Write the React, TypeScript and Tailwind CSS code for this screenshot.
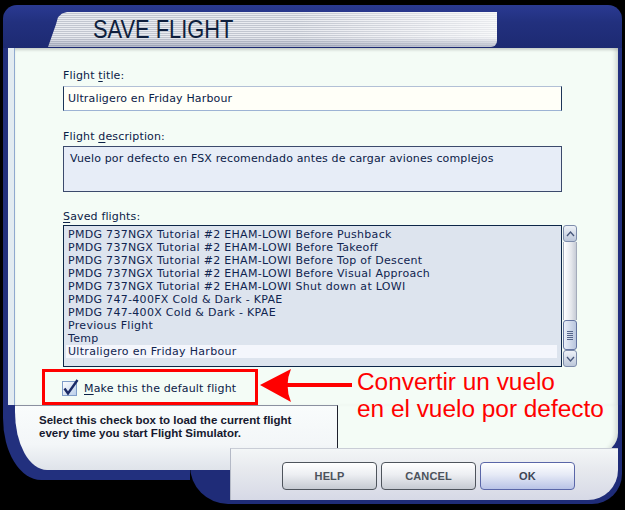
import React from 'react';

const flights = [
  'PMDG 737NGX Tutorial #2 EHAM-LOWI Before Pushback',
  'PMDG 737NGX Tutorial #2 EHAM-LOWI Before Takeoff',
  'PMDG 737NGX Tutorial #2 EHAM-LOWI Before Top of Descent',
  'PMDG 737NGX Tutorial #2 EHAM-LOWI Before Visual Approach',
  'PMDG 737NGX Tutorial #2 EHAM-LOWI Shut down at LOWI',
  'PMDG 747-400FX Cold & Dark - KPAE',
  'PMDG 747-400X Cold & Dark - KPAE',
  'Previous Flight',
  'Temp',
  'Ultraligero en Friday Harbour',
];

function Chevron({ up }: { up?: boolean }) {
  return (
    <svg width="9" height="6" viewBox="0 0 9 6" aria-hidden>
      <path
        d={up ? 'M1 5 L4.5 1 L8 5' : 'M1 1 L4.5 5 L8 1'}
        stroke="#46567a"
        strokeWidth="1.3"
        fill="none"
      />
    </svg>
  );
}

function Scrollbar() {
  return (
    <div className="ml-px flex w-[14px] flex-col">
      <div className="flex h-[17px] items-center justify-center rounded-[3px] border border-[#7d8cab] bg-[image:linear-gradient(180deg,#eef2f8,#bcc7da)]">
        <Chevron up />
      </div>
      <div className="h-[78px] border-x border-[#a3abbb] bg-[image:linear-gradient(90deg,#ffffff,#e4e7ec_60%,#c7ccd6)]" />
      <div className="flex h-[30px] flex-col items-center justify-center gap-px rounded-[3px] border border-[#6474a0] bg-[image:linear-gradient(90deg,#e8eef8,#b9c6de)]">
        {[0, 1, 2, 3, 4].map((i) => (
          <div key={i} className="h-px w-[6px] bg-[#55658a]" />
        ))}
      </div>
      <div className="flex h-[17px] items-center justify-center rounded-[3px] border border-[#7d8cab] bg-[image:linear-gradient(180deg,#eef2f8,#bcc7da)]">
        <Chevron />
      </div>
    </div>
  );
}

function DialogButton({ label, primary }: { label: string; primary?: boolean }) {
  return (
    <button
      className={
        primary
          ? "h-[28px] w-[95px] rounded-[4px] border border-[#5a66a8] bg-[image:linear-gradient(180deg,#ffffff,#e6eaf6_45%,#b9c3e6)] font-['Liberation_Sans',sans-serif] text-[11px] font-bold text-[#3c4454]"
          : "h-[28px] w-[95px] rounded-[4px] border border-[#4e545c] bg-[image:linear-gradient(180deg,#ffffff,#eceef2_45%,#c6cad2)] font-['Liberation_Sans',sans-serif] text-[11px] font-bold text-[#4c535c]"
      }
    >
      {label}
    </button>
  );
}

export default function App() {
  return (
    <div className="relative h-[510px] w-[625px] overflow-hidden bg-black font-['DejaVu_Sans',sans-serif] text-[11px] leading-[13px] tracking-[0.15px] text-[#0b2147]">
      <div className="ml-[3px] flex w-[619px] flex-col pt-[5px]">
        {/* title bar */}
        <div className="h-[43px] rounded-t-[14px] bg-[image:linear-gradient(180deg,#2a3a92,#22307e_40%,#1d2a72)] pl-[45px] pt-[7px]">
          <div className="h-[35px] w-[449px] rounded-br-[6px] bg-[image:linear-gradient(180deg,transparent_72%,rgba(80,90,125,0.35)),linear-gradient(90deg,rgba(255,255,255,0)_55%,rgba(255,255,255,0.65)),repeating-linear-gradient(180deg,#e9ebf0_0px,#e9ebf0_1px,#c2c6d0_1px,#c2c6d0_2px)] pl-[45px] [clip-path:polygon(0_100%,8px_35%,10px_15%,14px_4%,19px_0,100%_0,100%_100%)]">
            <span className="inline-block origin-left scale-x-[0.84] font-['Liberation_Sans',sans-serif] text-[26px] leading-[35px] tracking-normal text-[#0f1f3d]">
              SAVE FLIGHT
            </span>
          </div>
        </div>

        {/* main panel */}
        <div className="flex bg-[#22307e] pl-[5px] pr-[4px]">
          <div className="w-[6px] bg-[#e2ebf1]" />
          <div className="w-px bg-[#8fa9cf]" />
          <div className="flex h-[357px] flex-1 flex-col bg-[#f4fcf6] pl-[48px] pt-[21px] shadow-[inset_0_3px_3px_-1px_rgba(0,0,0,0.18),inset_-5px_0_4px_-2px_rgba(0,0,0,0.12)]">
            <div>
              Flight <span className="underline underline-offset-2">t</span>itle:
            </div>
            <div className="mt-[4px] h-[25px] w-[499px] border-x border-y border-x-[#1c3558] border-t-[#b2c0d6] border-b-[#9db3d4] bg-[#fffff8] pl-[4px] leading-[23px]">
              Ultraligero en Friday Harbour
            </div>

            <div className="mt-[19px]">
              Flight <span className="underline underline-offset-2">d</span>escription:
            </div>
            <div className="mt-[3px] h-[46px] w-[499px] border border-[#3b4a6c] bg-[#e7edf7] pl-[6px] pt-[5px]">
              Vuelo por defecto en FSX recomendado antes de cargar aviones complejos
            </div>

            <div className="mt-[18px]">
              <span className="underline underline-offset-2">S</span>aved flights:
            </div>
            <div className="mt-[2px] flex">
              <div className="h-[142px] w-[499px] border border-[#0c2648] bg-[#dde4ee] pt-[2px] tracking-[0.3px]">
                {flights.map((f, i) => (
                  <div
                    key={f}
                    className={
                      i === flights.length - 1
                        ? 'mx-[2px] mr-[4px] h-[13px] bg-[#f4f6fc] pl-[2px] text-[#102450]'
                        : 'mx-[2px] h-[13px] pl-[2px] text-[#102450]'
                    }
                  >
                    {f}
                  </div>
                ))}
              </div>
              <Scrollbar />
            </div>

            <div className="-ml-px mt-[12px] flex items-center gap-[4px]">
              <svg width="18" height="17" viewBox="0 0 18 17" aria-hidden>
                <defs>
                  <linearGradient id="cb" x1="0" y1="0" x2="1" y2="1">
                    <stop offset="0" stopColor="#ffffff" />
                    <stop offset="1" stopColor="#b9cdea" />
                  </linearGradient>
                </defs>
                <rect x="0.5" y="2.5" width="14" height="14" fill="url(#cb)" stroke="#7f9dc9" />
                <path d="M2.5 9.5 L6 14.5 L15.5 1" stroke="#1a2a66" strokeWidth="2.4" fill="none" />
              </svg>
              <div className="pt-[2px]">
                <span className="underline underline-offset-2">M</span>ake this the default flight
              </div>
            </div>
          </div>
        </div>

        {/* lower section: frame, help panel and button bar share one grid cell */}
        <div className="grid h-[100px]">
          <div className="col-start-1 row-start-1 flex items-start">
            <div className="h-[75px] w-[187px] rounded-bl-[38px_62px] bg-[#22307e]" />
            <div className="h-[99px] w-[432px] rounded-bl-[38px] rounded-br-[30px] bg-[#1f2c78]" />
          </div>
          <div className="col-start-1 row-start-1 ml-[330px] h-[48px] w-[285px] rounded-br-[20px] bg-[#f4fcf6] shadow-[inset_-5px_0_4px_-2px_rgba(0,0,0,0.12)]" />
          <div className="col-start-1 row-start-1 ml-[12px] h-[65px] w-[323px] rounded-bl-[32px_58px] border-r border-t border-r-[#1d1f2c] border-t-[#8a90a0] bg-[image:linear-gradient(180deg,#f9fcfc,#f3f6f8_60%,#dfe3ea)] pl-[24px] pt-[8px] font-['Liberation_Sans',sans-serif] text-[11.5px] font-bold leading-[13px] tracking-normal text-[#16182e]">
            Select this check box to load the current flight
            <br />
            every time you start Flight Simulator.
          </div>
          <div className="col-start-1 row-start-1 ml-[227px] mt-[43px] flex h-[52px] w-[388px] gap-[4px] rounded-br-[30px] border-l border-t border-l-[#b4b9c6] border-t-[#c9cdd6] bg-[image:linear-gradient(180deg,#f3f6f7,#e7e9ee_40%,#d6d9e6)] pl-[51px] pt-[13px]">
            <DialogButton label="HELP" />
            <DialogButton label="CANCEL" />
            <DialogButton label="OK" primary />
          </div>
        </div>
      </div>

      {/* red annotation */}
      <div className="absolute left-[42px] top-[369px] h-[36px] w-[216px] border-[3px] border-[#ff0000]" />
      <svg className="absolute left-[258px] top-[366px]" width="96" height="40" viewBox="0 0 96 40" aria-hidden>
        <path d="M2 19 L33 3 Q26 19 33 36 Z" fill="#ff0000" />
        <rect x="28" y="17" width="66" height="4" fill="#ff0000" />
      </svg>
      <div className="absolute left-[357px] top-[368px] font-['Liberation_Sans',sans-serif] text-[24.4px] leading-[27px] tracking-normal text-[#ff0000]">
        Convertir un vuelo
        <br />
        en el vuelo por defecto
      </div>
    </div>
  );
}
